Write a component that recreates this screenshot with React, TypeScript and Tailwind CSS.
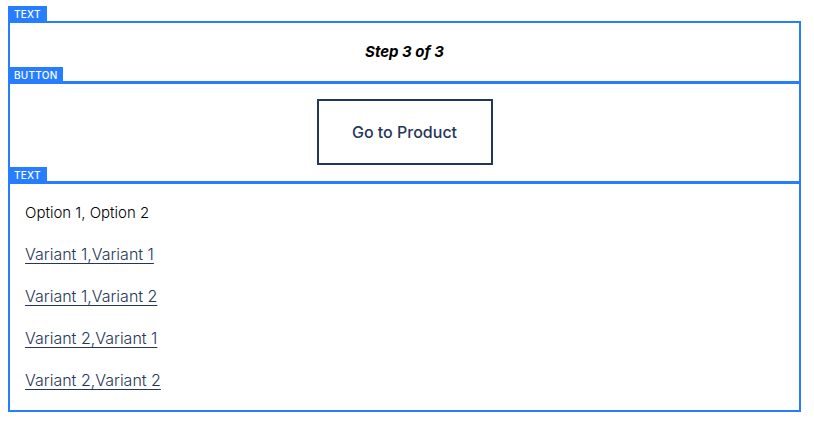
import type { ReactNode } from "react";

const variants = [
  "Variant 1,Variant 1",
  "Variant 1,Variant 2",
  "Variant 2,Variant 1",
  "Variant 2,Variant 2",
];

function Block({ label, children }: { label: string; children: ReactNode }) {
  return (
    <section className="relative border-t-3 border-[#267dff] px-[15px] first:border-t-2">
      <span className="absolute -top-[17px] -left-0.5 flex h-4 items-center bg-[#267dff] px-1.5 text-[10px] leading-none font-medium tracking-wide text-white">
        {label}
      </span>
      {children}
    </section>
  );
}

export default function App() {
  return (
    <main className="bg-white pt-[21px] pr-[13px] pb-2 pl-2 font-['Inter','Liberation_Sans',sans-serif] text-base leading-[26px]">
      <div className="border-x-2 border-b-2 border-[#267dff]">
        <Block label="TEXT">
          <p className="py-4 text-center text-[15px] leading-[26px] font-bold text-black italic">
            Step 3 of 3
          </p>
        </Block>
        <Block label="BUTTON">
          <div className="flex justify-center pt-[15px] pb-4">
            <button
              type="button"
              className="h-[66px] min-w-44 border-2 border-[#26365a] px-8 font-medium text-[#26365a]"
            >
              Go to Product
            </button>
          </div>
        </Block>
        <Block label="TEXT">
          <div className="pt-4 pb-[17px] font-light">
            <p className="text-[15px] leading-[26px] text-black">Option 1, Option 2</p>
            <div className="mt-[15px] space-y-4">
              {variants.map((name) => (
                <p key={name}>
                  <a
                    href="#"
                    className="text-[#26365a] underline decoration-[#26365a] decoration-1 underline-offset-3 [text-decoration-skip-ink:none]"
                  >
                    {name}
                  </a>
                </p>
              ))}
            </div>
          </div>
        </Block>
      </div>
    </main>
  );
}
